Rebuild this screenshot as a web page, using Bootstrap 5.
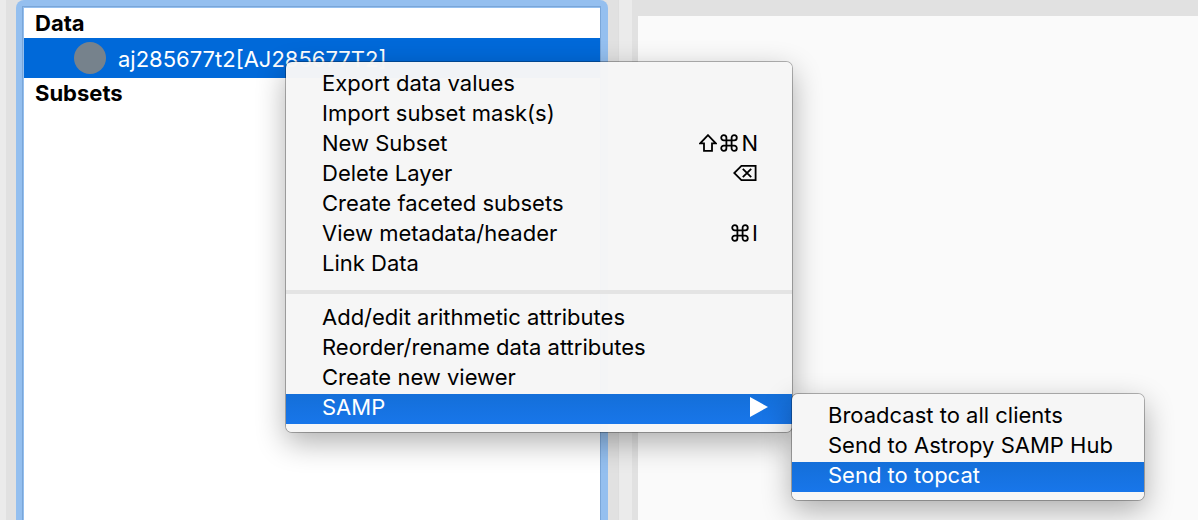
<!DOCTYPE html>
<html lang="en">
<head>
<meta charset="utf-8">
<meta name="viewport" content="width=device-width, initial-scale=1">
<title>Data collection</title>
<link href="https://cdn.jsdelivr.net/npm/bootstrap@5.3.0/dist/css/bootstrap.min.css" rel="stylesheet">
<style>
  body {
    background: #e1e1e1;
    color: #000;
    font-family: Inter, "Liberation Sans", sans-serif;
    font-size: 22px;
    line-height: 30px;
  }
  .workspace { min-height: 100vh; }
  .side-pane { flex: 638 1 0; min-width: 0; }
  .view-pane { flex: 560 1 0; min-width: 0; padding-top: 16px; }
  .view-canvas { background: #fafafa; }
  .edge { width: 6px; background: #ebebeb; }
  .splitter { width: 14px; margin-right: 6px; background: #ebebeb; border-left: 1px solid #dedede; }
  .focus-frame {
    margin: 0 10px;
    padding: 6px 7px 0 6px;
    background: #94bfef;
    border-radius: 8px 8px 0 0;
  }
  .layer-tree {
    background: #fff;
    border: solid #7aa6d8;
    border-width: 1px 1px 0;
    outline: 0;
    box-shadow: inset 1px 1px 0 #94bfef;
    padding: 1px 0 0 1px;
  }
  .tree-heading { padding-left: 11px; font-size: 22px; line-height: 30px; }
  .tree-row { height: 40px; padding-left: 50px; gap: 12px; background: #0069d9; color: #fff; }
  .layer-dot { width: 32px; height: 32px; background: #76828c; }
  .layer-name { padding-top: 2px; }

  .mac-menu {
    --bs-dropdown-bg: rgba(246, 246, 246, .98);
    --bs-dropdown-border-width: 0;
    --bs-dropdown-border-radius: 6px;
    --bs-dropdown-padding-x: 0;
    --bs-dropdown-padding-y: 8px;
    --bs-dropdown-font-size: 22px;
    --bs-dropdown-color: #000;
    --bs-dropdown-link-color: #000;
    --bs-dropdown-item-padding-x: 36px;
    --bs-dropdown-item-padding-y: 0;
    box-shadow: 0 0 0 1px rgba(0, 0, 0, .28), 0 10px 30px rgba(0, 0, 0, .32);
  }
  .mac-menu .dropdown-item { height: 30px; padding-bottom: 4px; line-height: 26px; }
  .mac-menu .dropdown-item.active { color: #fff; background: linear-gradient(#146fd9, #1876ea); }
  .mac-menu .dropdown-divider { margin: 10px 0; border-top: 4px solid #e4e4e4; opacity: 1; }
  .context-menu { left: 286px; top: 62px; width: 506px; }
  .samp-menu { left: 792px; top: 394px; width: 352px; }
  .context-menu .key-row { padding-right: 34px; }
  .context-menu .arrow-row { padding-right: 24px; }
  .shortcut { gap: 3px; }
  .shortcut svg { display: block; fill: none; stroke: #000; stroke-width: 1.8; }
  .submenu-arrow { display: block; fill: #fff; }
</style>
</head>
<body>
<main class="workspace d-flex position-relative overflow-hidden">
  <section class="side-pane d-flex">
    <div class="edge"></div>
    <div class="focus-frame flex-grow-1 d-flex">
      <div class="layer-tree flex-grow-1" tabindex="0">
        <h2 class="tree-heading fw-bold m-0">Data</h2>
        <div class="tree-row d-flex align-items-center">
          <span class="layer-dot rounded-circle"></span>
          <span class="layer-name">aj285677t2[AJ285677T2]</span>
        </div>
        <h2 class="tree-heading fw-bold m-0">Subsets</h2>
      </div>
    </div>
    <div class="splitter"></div>
  </section>
  <section class="view-pane d-flex"><div class="view-canvas flex-grow-1"></div></section>

  <div class="mac-menu context-menu dropdown-menu show">
    <button type="button" class="dropdown-item">Export data values</button>
    <button type="button" class="dropdown-item">Import subset mask(s)</button>
    <button type="button" class="dropdown-item key-row d-flex justify-content-between">New Subset
      <span class="shortcut d-flex align-items-center">
        <svg width="18" height="18" viewBox="0 0 18 18" aria-label="Shift"><path d="M9 1.2 1.2 9.4H5v7.4h8V9.4h3.8Z"/></svg>
        <svg width="18" height="18" viewBox="0 0 18 18" aria-label="Command"><path d="M6.4 6.4H3.8A2.6 2.6 0 1 1 6.4 3.8V14.2A2.6 2.6 0 1 1 3.8 11.6H14.2A2.6 2.6 0 1 1 11.6 14.2V3.8A2.6 2.6 0 1 1 14.2 6.4H6.4"/></svg>
        <span>N</span>
      </span>
    </button>
    <button type="button" class="dropdown-item key-row d-flex justify-content-between">Delete Layer
      <span class="shortcut d-flex align-items-center">
        <svg width="25" height="18" viewBox="0 0 25 18" aria-label="Delete"><path d="M8.4 1.8H22.6V16.2H8.4L1.2 9ZM9.8 4.8 18.2 13.2M18.2 4.8 9.8 13.2"/></svg>
      </span>
    </button>
    <button type="button" class="dropdown-item">Create faceted subsets</button>
    <button type="button" class="dropdown-item key-row d-flex justify-content-between">View metadata/header
      <span class="shortcut d-flex align-items-center">
        <svg width="18" height="18" viewBox="0 0 18 18" aria-label="Command"><path d="M6.4 6.4H3.8A2.6 2.6 0 1 1 6.4 3.8V14.2A2.6 2.6 0 1 1 3.8 11.6H14.2A2.6 2.6 0 1 1 11.6 14.2V3.8A2.6 2.6 0 1 1 14.2 6.4H6.4"/></svg>
        <span>I</span>
      </span>
    </button>
    <button type="button" class="dropdown-item">Link Data</button>
    <hr class="dropdown-divider">
    <button type="button" class="dropdown-item">Add/edit arithmetic attributes</button>
    <button type="button" class="dropdown-item">Reorder/rename data attributes</button>
    <button type="button" class="dropdown-item">Create new viewer</button>
    <button type="button" class="dropdown-item arrow-row active d-flex align-items-center justify-content-between" aria-haspopup="true" aria-expanded="true">SAMP
      <svg class="submenu-arrow" width="18" height="20" viewBox="0 0 18 20" aria-hidden="true"><path d="M0 0 18 10 0 20Z"/></svg>
    </button>
  </div>

  <div class="mac-menu samp-menu dropdown-menu show">
    <button type="button" class="dropdown-item">Broadcast to all clients</button>
    <button type="button" class="dropdown-item">Send to Astropy SAMP Hub</button>
    <button type="button" class="dropdown-item active">Send to topcat</button>
  </div>
</main>
<script src="https://cdn.jsdelivr.net/npm/bootstrap@5.3.0/dist/js/bootstrap.bundle.min.js"></script>
</body>
</html>
